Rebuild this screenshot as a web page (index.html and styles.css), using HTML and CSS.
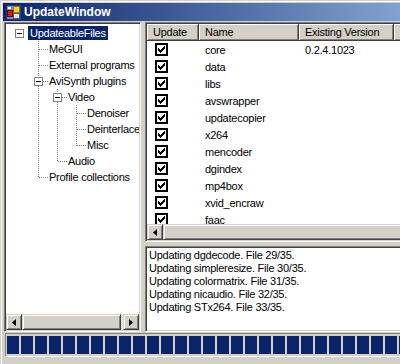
FILE: index.html
```html
<!DOCTYPE html>
<html lang="en">
<head>
  <meta charset="UTF-8">
  <title>UpdateWindow</title>
  <link rel="stylesheet" href="styles.css">
</head>
<body>
  <svg width="0" height="0" class="defs">
    <symbol id="chk" viewBox="0 0 13 13">
      <rect x="1" y="1" width="11" height="11" fill="#fff" stroke="#000" stroke-width="2"/>
      <path d="M3 5h1v3h-1zM4 6h1v3h-1zM5 7h1v3h-1zM6 6h1v3h-1zM7 5h1v3h-1zM8 4h1v3h-1zM9 3h1v3h-1z" fill="#000"/>
    </symbol>
  </svg>

  <div class="window">
    <div class="titlebar">
      <svg class="app-icon" width="16" height="16" viewBox="0 0 16 16" shape-rendering="crispEdges">
        <rect x="1" y="1" width="14" height="14" fill="#6f8fc8" stroke="#1c3a8c"/>
        <rect x="8" y="2" width="6" height="6" fill="#f4d020" stroke="#a07000"/>
        <rect x="2" y="6" width="5" height="6" fill="#d02020" stroke="#700000"/>
        <rect x="8" y="9" width="6" height="5" fill="#e8e8e8" stroke="#506070"/>
        <rect x="3" y="3" width="3" height="2" fill="#fff"/>
      </svg>
      <span class="title">UpdateWindow</span>
    </div>

    <div class="client">
      <div class="panes">
        <div class="tree sunken">
          <div class="tree-view">
            <svg class="tree-lines" width="133" height="170" shape-rendering="crispEdges">
              <g stroke="#808080" stroke-dasharray="1 1">
                <line x1="32.5" y1="17" x2="32.5" y2="53"/>
                <line x1="32.5" y1="62" x2="32.5" y2="154"/>
                <line x1="33" y1="25.5" x2="42" y2="25.5"/>
                <line x1="33" y1="41.5" x2="42" y2="41.5"/>
                <line x1="33" y1="153.5" x2="42" y2="153.5"/>
                <line x1="37" y1="57.5" x2="42" y2="57.5"/>
                <line x1="51.5" y1="65" x2="51.5" y2="69"/>
                <line x1="51.5" y1="78" x2="51.5" y2="138"/>
                <line x1="56" y1="73.5" x2="61" y2="73.5"/>
                <line x1="52" y1="137.5" x2="61" y2="137.5"/>
                <line x1="70.5" y1="81" x2="70.5" y2="122"/>
                <line x1="71" y1="89.5" x2="80" y2="89.5"/>
                <line x1="71" y1="105.5" x2="80" y2="105.5"/>
                <line x1="71" y1="121.5" x2="80" y2="121.5"/>
              </g>
              <g fill="#fff" stroke="#808080">
                <rect x="9.5" y="5.5" width="8" height="8"/>
                <rect x="28.5" y="53.5" width="8" height="8"/>
                <rect x="47.5" y="69.5" width="8" height="8"/>
              </g>
              <g stroke="#000">
                <line x1="11" y1="9.5" x2="16" y2="9.5"/>
                <line x1="30" y1="57.5" x2="35" y2="57.5"/>
                <line x1="49" y1="73.5" x2="54" y2="73.5"/>
              </g>
            </svg>
            <div class="node l0"><span class="label selected">UpdateableFiles</span></div>
            <div class="node l1"><span class="label">MeGUI</span></div>
            <div class="node l1"><span class="label">External programs</span></div>
            <div class="node l1"><span class="label">AviSynth plugins</span></div>
            <div class="node l2"><span class="label">Video</span></div>
            <div class="node l3"><span class="label">Denoiser</span></div>
            <div class="node l3"><span class="label">Deinterlace</span></div>
            <div class="node l3"><span class="label">Misc</span></div>
            <div class="node l2"><span class="label">Audio</span></div>
            <div class="node l1"><span class="label">Profile collections</span></div>
          </div>
          <div class="hscroll">
            <div class="sb-btn">
              <svg width="4" height="7" viewBox="0 0 4 7"><path d="M0 3.5L4 0v7z" fill="#000"/></svg>
            </div>
            <div class="sb-thumb tree-thumb"></div>
            <div class="sb-track"></div>
            <div class="sb-btn">
              <svg width="4" height="7" viewBox="0 0 4 7"><path d="M4 3.5L0 0v7z" fill="#000"/></svg>
            </div>
          </div>
        </div>

        <div class="right">
          <div class="list sunken">
            <div class="list-view">
              <div class="list-head">
                <div class="col-h c-update">Update</div>
                <div class="col-h c-name">Name</div>
                <div class="col-h c-ver">Existing Version</div>
                <div class="col-h c-rest"></div>
              </div>
              <div class="list-row"><span class="c-update"><svg class="chk" width="13" height="13"><use href="#chk"/></svg></span><span class="c-name">core</span><span class="c-ver">0.2.4.1023</span></div>
              <div class="list-row"><span class="c-update"><svg class="chk" width="13" height="13"><use href="#chk"/></svg></span><span class="c-name">data</span></div>
              <div class="list-row"><span class="c-update"><svg class="chk" width="13" height="13"><use href="#chk"/></svg></span><span class="c-name">libs</span></div>
              <div class="list-row"><span class="c-update"><svg class="chk" width="13" height="13"><use href="#chk"/></svg></span><span class="c-name">avswrapper</span></div>
              <div class="list-row"><span class="c-update"><svg class="chk" width="13" height="13"><use href="#chk"/></svg></span><span class="c-name">updatecopier</span></div>
              <div class="list-row"><span class="c-update"><svg class="chk" width="13" height="13"><use href="#chk"/></svg></span><span class="c-name">x264</span></div>
              <div class="list-row"><span class="c-update"><svg class="chk" width="13" height="13"><use href="#chk"/></svg></span><span class="c-name">mencoder</span></div>
              <div class="list-row"><span class="c-update"><svg class="chk" width="13" height="13"><use href="#chk"/></svg></span><span class="c-name">dgindex</span></div>
              <div class="list-row"><span class="c-update"><svg class="chk" width="13" height="13"><use href="#chk"/></svg></span><span class="c-name">mp4box</span></div>
              <div class="list-row"><span class="c-update"><svg class="chk" width="13" height="13"><use href="#chk"/></svg></span><span class="c-name">xvid_encraw</span></div>
              <div class="list-row"><span class="c-update"><svg class="chk" width="13" height="13"><use href="#chk"/></svg></span><span class="c-name">faac</span></div>
            </div>
            <div class="hscroll">
              <div class="sb-btn">
                <svg width="4" height="7" viewBox="0 0 4 7"><path d="M0 3.5L4 0v7z" fill="#000"/></svg>
              </div>
              <div class="sb-thumb list-thumb"></div>
            </div>
          </div>

          <div class="log sunken">
            <div>Updating dgdecode. File 29/35.</div>
            <div>Updating simpleresize. File 30/35.</div>
            <div>Updating colormatrix. File 31/35.</div>
            <div>Updating nicaudio. File 32/35.</div>
            <div>Updating STx264. File 33/35.</div>
          </div>
        </div>
      </div>

      <div class="progress"><div class="progress-fill"></div></div>
    </div>
  </div>
</body>
</html>
```

FILE: styles.css
```css
html, body {
  margin: 0;
  overflow: hidden;
  background: #d4d0c8;
}
body {
  font-family: "Liberation Sans", Arial, sans-serif;
  font-size: 11px;
  letter-spacing: -0.25px;
  color: #000;
}
.defs {
  position: absolute;
}
.window {
  width: 440px;
  height: 364px;
  box-sizing: border-box;
  border-top: 1px solid #d4d0c8;
  border-left: 1px solid #d4d0c8;
  box-shadow: inset 1px 1px #fff;
  padding: 2px 0 0 2px;
}
.titlebar {
  height: 18px;
  display: flex;
  align-items: center;
  padding-left: 2px;
  background: linear-gradient(to right, #0a246a, #a6caf0) 0 0 / 520px 100% no-repeat;
  color: #fff;
  font-weight: bold;
  font-size: 12px;
  letter-spacing: 0;
}
.app-icon {
  margin-right: 3px;
}
.client {
  padding: 1px 0 0 1px;
}
.panes {
  display: flex;
  gap: 4px;
  height: 310px;
}
.sunken {
  box-sizing: border-box;
  border: 1px solid;
  border-color: #808080 #fff #fff #808080;
  padding: 1px;
  box-shadow: inset 1px 1px #404040, inset -1px -1px #d4d0c8;
  background: #fff;
}

/* tree */
.tree {
  width: 137px;
  display: flex;
  flex-direction: column;
}
.tree-view {
  flex: 1;
  position: relative;
  padding-top: 1px;
  overflow: hidden;
}
.tree-lines {
  position: absolute;
  left: 0;
  top: 0;
}
.node {
  height: 16px;
  display: flex;
  align-items: center;
  white-space: nowrap;
}
.l0 { padding-left: 22px; }
.l1 { padding-left: 41px; }
.l2 { padding-left: 60px; }
.l3 { padding-left: 79px; }
.label {
  height: 14px;
  line-height: 14px;
  padding: 0 2px;
}
.selected {
  background: #0a246a;
  color: #fff;
}

/* scrollbars */
.hscroll {
  height: 16px;
  display: flex;
  flex-shrink: 0;
}
.sb-btn, .sb-thumb {
  box-sizing: border-box;
  border: 1px solid;
  border-color: #d4d0c8 #404040 #404040 #d4d0c8;
  box-shadow: inset 1px 1px #fff, inset -1px -1px #808080;
  background: #d4d0c8;
}
.sb-btn {
  width: 16px;
  display: flex;
  align-items: center;
  justify-content: center;
}
.tree-thumb {
  width: 99px;
}
.list-thumb {
  flex: 1;
}
.sb-track {
  flex: 1;
  background: repeating-conic-gradient(#fff 0 25%, #d4d0c8 0 50%) 0 0 / 2px 2px;
}

/* list */
.right {
  flex: 1;
  display: flex;
  flex-direction: column;
  gap: 4px;
}
.list {
  height: 220px;
  display: flex;
  flex-direction: column;
}
.list-view {
  flex: 1;
  overflow: hidden;
}
.list-head {
  display: flex;
  height: 17px;
}
.col-h {
  box-sizing: border-box;
  background: #d4d0c8;
  border-right: 1px solid #404040;
  border-bottom: 1px solid #404040;
  box-shadow: inset 1px 1px #fff, inset -1px -1px #808080;
  line-height: 16px;
}
.list-row {
  display: flex;
  align-items: center;
  height: 17px;
  white-space: nowrap;
}
.c-update { width: 52px; flex-shrink: 0; padding-left: 6px; box-sizing: border-box; }
.c-name { width: 100px; flex-shrink: 0; padding-left: 6px; box-sizing: border-box; }
.c-ver { width: 95px; flex-shrink: 0; padding-left: 6px; box-sizing: border-box; }
.c-rest { flex: 1; }
.list-row .c-update {
  padding-left: 8px;
  height: 13px;
}
.chk {
  display: block;
}

/* log */
.log {
  flex: 1;
  padding: 2px 3px;
  line-height: 13px;
  white-space: nowrap;
  overflow: hidden;
}

/* progress */
.progress {
  margin: 1px 0 0 1px;
  height: 24px;
  box-sizing: border-box;
  border: 1px solid;
  border-color: #808080 #fff #fff #808080;
  padding: 2px 1px;
}
.progress-fill {
  height: 100%;
  background: repeating-linear-gradient(to right, #0a246a 0 12px, transparent 12px 14px);
}
```
